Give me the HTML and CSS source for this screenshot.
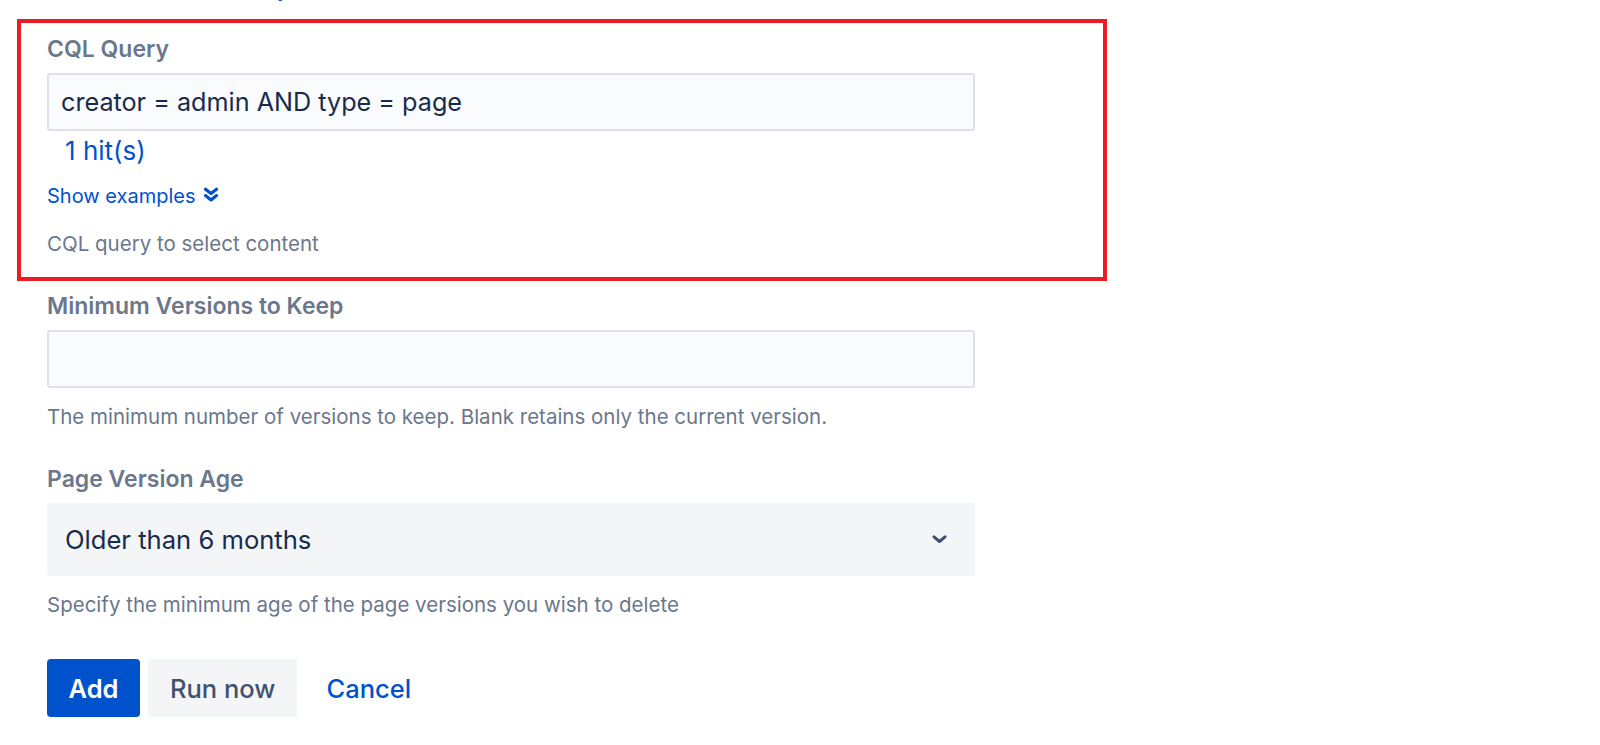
FILE: index.html
```html
<!DOCTYPE html>
<html lang="en">

<head>
    <meta charset="UTF-8">
    <meta name="viewport" content="width=device-width, initial-scale=1.0">
    <title>Version Cleanup Policy</title>
    <link rel="stylesheet" href="styles.css">
</head>

<body>
    <div class="page">
        <a class="crumb" href="#">Content retention history</a>

        <form class="policy-form">
            <div class="field field-highlight">
                <label class="field-label" for="cql">CQL Query</label>
                <input class="text-input" id="cql" type="text" value="creator = admin AND type = page">
                <a class="hits" href="#">1 hit(s)</a>
                <a class="examples-toggle" href="#">
                    <span>Show examples</span>
                    <svg width="16" height="16" viewBox="0 0 16 16">
                        <path d="M2.5 2.2 L8 6.6 L13.5 2.2" />
                        <path d="M2.5 8.6 L8 13 L13.5 8.6" />
                    </svg>
                </a>
                <div class="field-help first-help">CQL query to select content</div>
            </div>

            <div class="field field-versions">
                <label class="field-label" for="min-versions">Minimum Versions to Keep</label>
                <input class="text-input" id="min-versions" type="text" value="">
                <div class="field-help">The minimum number of versions to keep. Blank retains only the current version.</div>
            </div>

            <div class="field field-age">
                <label class="field-label">Page Version Age</label>
                <div class="select">
                    <span>Older than 6 months</span>
                    <svg width="15" height="9" viewBox="0 0 15 9">
                        <path d="M2 1.8 L7.5 6.5 L13 1.8" />
                    </svg>
                </div>
                <div class="field-help">Specify the minimum age of the page versions you wish to delete</div>
            </div>

            <div class="actions">
                <button class="btn btn-primary" type="button">Add</button>
                <button class="btn btn-default" type="button">Run now</button>
                <button class="btn btn-link" type="button">Cancel</button>
            </div>
        </form>
    </div>
</body>

</html>
```

FILE: styles.css
```css
* {
    margin: 0;
    padding: 0;
    font-family: Inter, 'Liberation Sans', sans-serif;
}

body {
    background: #ffffff;
    overflow: hidden;
}

.page {
    padding-left: 17px;
}

/* link line above the form, mostly scrolled out of view */
.crumb {
    display: block;
    margin: -23px 0 0 30px;
    font-size: 20.6px;
    line-height: 26px;
    color: #0052cc;
    text-decoration: none;
}

.field {
    width: 928px;
    padding: 0 30px;
}

.field-highlight {
    margin-top: 16px;
    border: 4px solid #ec1c24;
    padding: 12px 128px 20px 26px;
}

.field-versions {
    margin-top: 11px;
}

.field-age {
    margin-top: 35px;
}

.field-label {
    display: block;
    font-size: 23px;
    font-weight: 600;
    line-height: 28px;
    color: #6b778c;
    margin-bottom: 10px;
}

.text-input {
    display: block;
    box-sizing: border-box;
    width: 100%;
    height: 58px;
    padding: 0 12px;
    border: 2px solid #dfe1e6;
    border-radius: 3px;
    background: #fafbfc;
    font-size: 25.2px;
    color: #172b4d;
    outline: none;
}

.hits {
    display: block;
    margin-top: 5px;
    padding-left: 18px;
    font-size: 26px;
    line-height: 30px;
    color: #0052cc;
    text-decoration: none;
}

.examples-toggle {
    display: flex;
    align-items: center;
    gap: 8px;
    margin-top: 17px;
    font-size: 20px;
    line-height: 26px;
    color: #0052cc;
    text-decoration: none;
}

.examples-toggle svg {
    margin-top: -3px;
    fill: none;
    stroke: #0052cc;
    stroke-width: 3.2;
    stroke-linecap: round;
    stroke-linejoin: round;
}

.field-help {
    margin-top: 16px;
    font-size: 20.5px;
    line-height: 26px;
    color: #6b778c;
}

.field-help.first-help {
    margin-top: 22px;
}

.select {
    display: flex;
    justify-content: space-between;
    align-items: center;
    height: 73px;
    padding: 0 28px 0 18px;
    border-radius: 3px;
    background: #f4f5f7;
    font-size: 25.6px;
    color: #172b4d;
}

.select svg {
    fill: none;
    stroke: #42526e;
    stroke-width: 3;
    stroke-linecap: round;
    stroke-linejoin: round;
}

.actions {
    display: flex;
    gap: 8px;
    margin-top: 41px;
    padding-left: 30px;
}

.btn {
    height: 58px;
    padding: 0 22px;
    border: none;
    border-radius: 4px;
    font-size: 25.5px;
    font-weight: 500;
    cursor: pointer;
}

.btn-primary {
    padding: 0 21.5px;
    background: #0052cc;
    color: #ffffff;
    font-weight: 600;
}

.btn-default {
    background: #f4f5f7;
    color: #42526e;
}

.btn-link {
    padding-left: 21px;
    background: none;
    color: #0052cc;
}
```
